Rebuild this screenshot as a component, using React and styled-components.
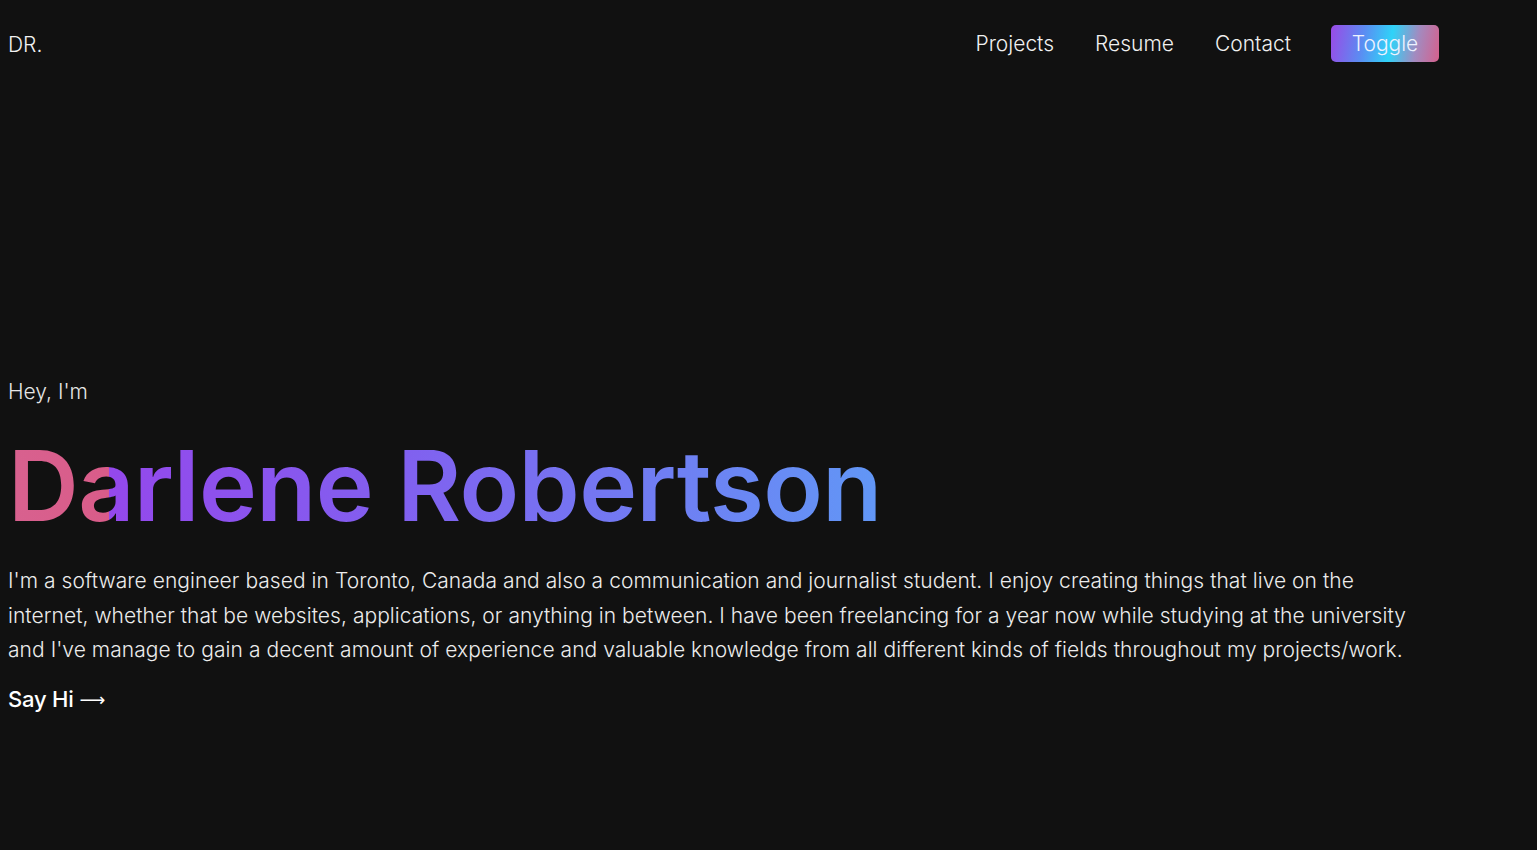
import React from "react";
import styled, { createGlobalStyle } from "styled-components";

const GlobalStyle = createGlobalStyle`
  html, body {
    margin: 0;
    background: #111111;
  }
  body {
    padding: 0 8px;
    font-family: Inter, "Noto Sans", sans-serif;
    color: #ffffff;
  }
`;

const Page = styled.div`
  max-width: 1431px;
  min-height: 850px;
  display: flex;
  flex-direction: column;
`;

const Nav = styled.header`
  height: 87px;
  display: flex;
  align-items: center;
  justify-content: space-between;
`;

const Logo = styled.div`
  font-size: 21px;
  font-weight: 300;
  color: #f2f2f2;
  margin-top: 1px;
`;

const Links = styled.nav`
  display: flex;
  align-items: center;
  gap: 41px;
`;

const NavLink = styled.a`
  font-size: 21px;
  font-weight: 300;
  color: #f0f0f0;
  text-decoration: none;
  cursor: pointer;
`;

const ToggleButton = styled.button`
  height: 37px;
  width: 108px;
  margin-left: -1px;
  border: none;
  border-radius: 5px;
  font-family: Inter, "Noto Sans", sans-serif;
  font-size: 21px;
  font-weight: 300;
  color: #eef2ff;
  background: linear-gradient(100deg, #9a4ae6 0%, #5b8cf2 30%, #2fd3f8 55%, #a28bc0 78%, #d6608c 100%);
  cursor: pointer;
`;

const Hero = styled.main`
  padding-top: 291px;
  display: flex;
  flex-direction: column;
`;

const Greeting = styled.p`
  margin: 0;
  font-size: 21px;
  font-weight: 300;
  color: #e6e6e6;
  line-height: 28px;
`;

const Name = styled.h1`
  margin: 25px 0 0;
  font-size: 98px;
  font-weight: 600;
  letter-spacing: -0.55px;
  line-height: 110px;
  width: fit-content;
  background: linear-gradient(
    90deg,
    #d8618f 0%,
    #d95c89 11.6%,
    #9448ec 11.6%,
    #8160ef 45%,
    #6197f6 100%
  );
  -webkit-background-clip: text;
  background-clip: text;
  color: transparent;
`;

const Bio = styled.p`
  margin: 23px 0 0;
  font-size: 21px;
  font-weight: 300;
  line-height: 34.5px;
  letter-spacing: 0.05px;
  color: #ececec;
`;

const SayHi = styled.a`
  margin-top: 18px;
  display: flex;
  align-items: center;
  gap: 6px;
  font-size: 22px;
  font-weight: 500;
  letter-spacing: -0.2px;
  color: #ffffff;
  text-decoration: none;
  cursor: pointer;
`;

const Arrow = styled.span`
  font-family: "DejaVu Sans", sans-serif;
  font-weight: 400;
  font-size: 18px;
  margin-top: 2px;
`;

export default function App() {
  return (
    <>
      <GlobalStyle />
      <Page>
        <Nav>
          <Logo>DR.</Logo>
          <Links>
            <NavLink>Projects</NavLink>
            <NavLink>Resume</NavLink>
            <NavLink>Contact</NavLink>
            <ToggleButton>Toggle</ToggleButton>
          </Links>
        </Nav>
        <Hero>
          <Greeting>Hey, I'm</Greeting>
          <Name>Darlene Robertson</Name>
          <Bio>
            I'm a software engineer based in Toronto, Canada and also a communication and journalist student. I enjoy creating things that live on the internet, whether that be websites, applications, or anything in between. I have been freelancing for a year now while studying at the university and I've manage to gain a decent amount of experience and valuable knowledge from all different kinds of fields throughout my projects/work.
          </Bio>
          <SayHi>
            Say Hi <Arrow>⟶</Arrow>
          </SayHi>
        </Hero>
      </Page>
    </>
  );
}
